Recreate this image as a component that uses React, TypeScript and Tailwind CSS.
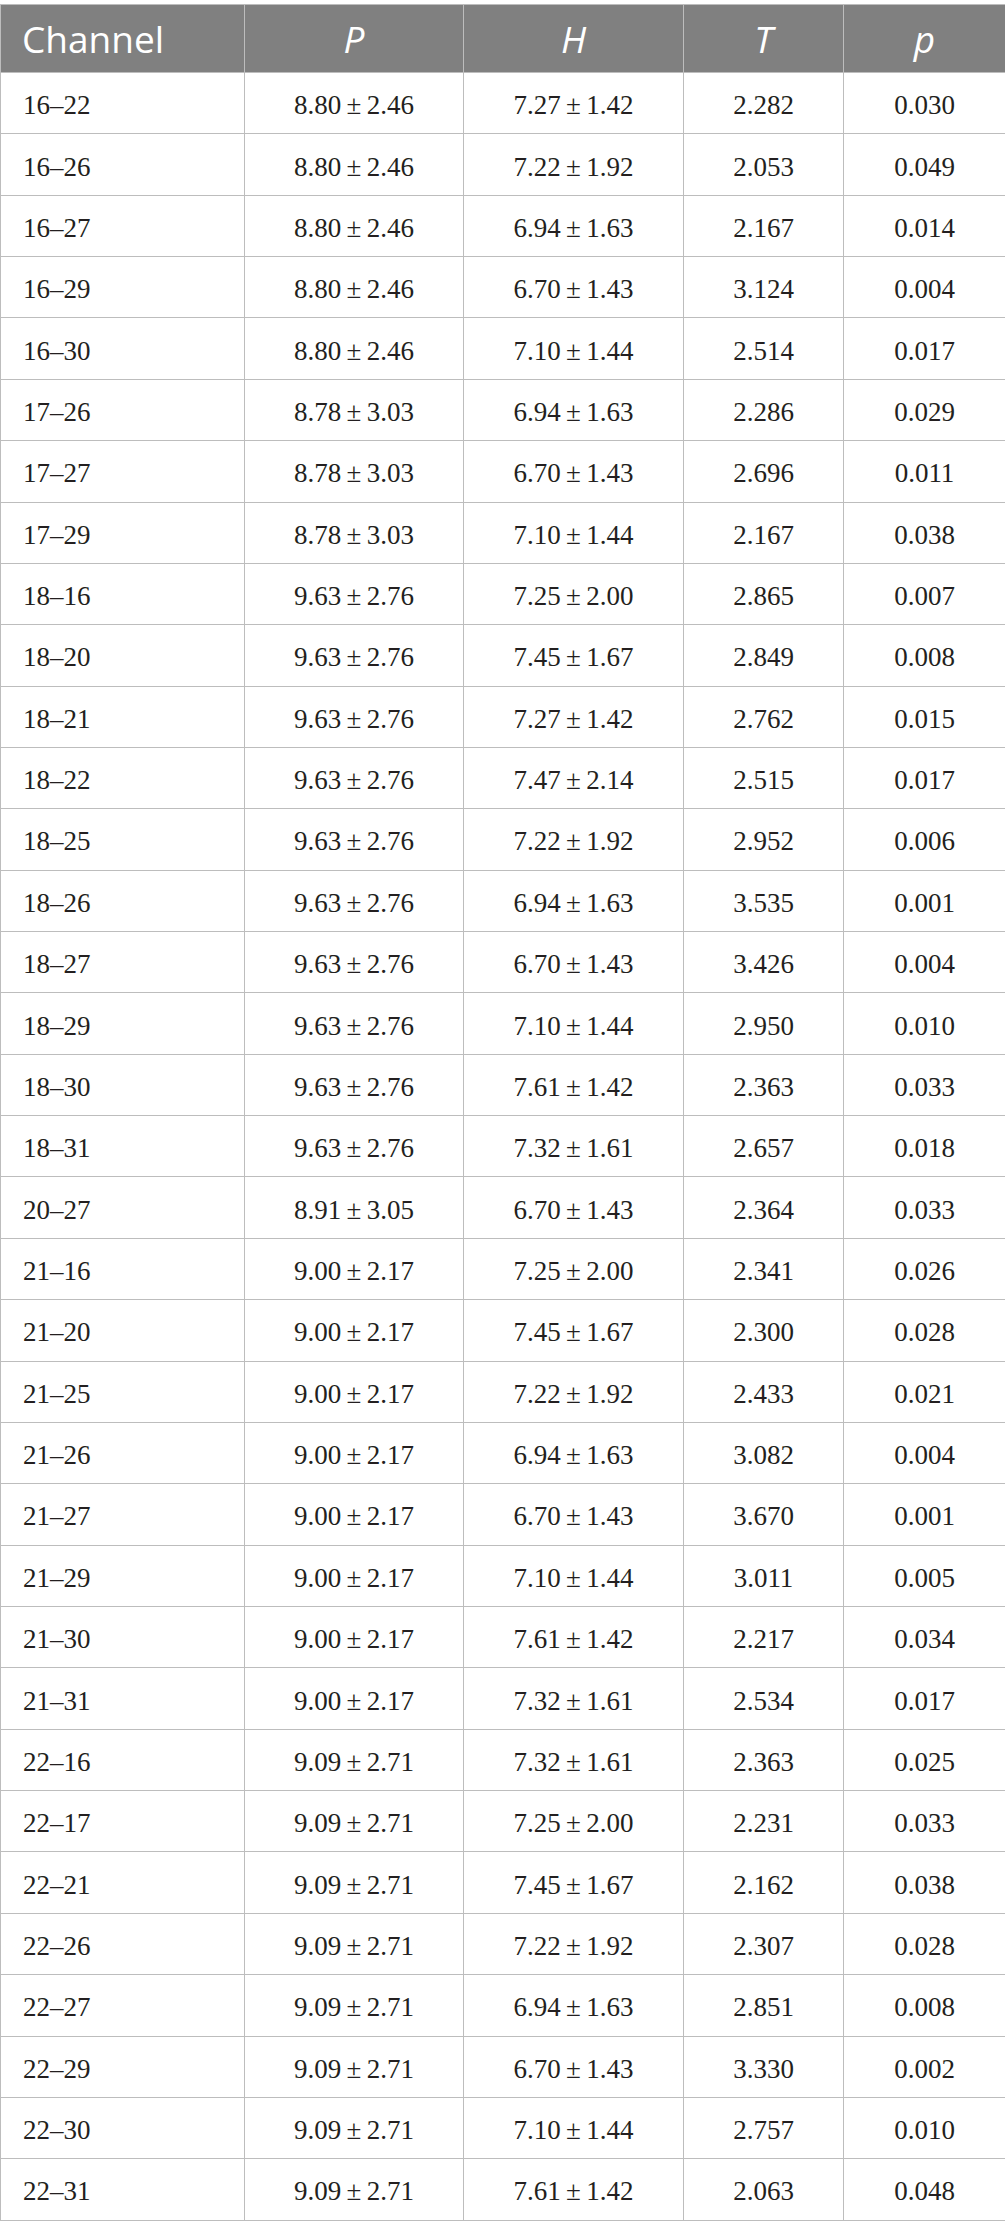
const rows: [string, string, string, string, string][] = [
  ["16–22", "8.80 ± 2.46", "7.27 ± 1.42", "2.282", "0.030"],
  ["16–26", "8.80 ± 2.46", "7.22 ± 1.92", "2.053", "0.049"],
  ["16–27", "8.80 ± 2.46", "6.94 ± 1.63", "2.167", "0.014"],
  ["16–29", "8.80 ± 2.46", "6.70 ± 1.43", "3.124", "0.004"],
  ["16–30", "8.80 ± 2.46", "7.10 ± 1.44", "2.514", "0.017"],
  ["17–26", "8.78 ± 3.03", "6.94 ± 1.63", "2.286", "0.029"],
  ["17–27", "8.78 ± 3.03", "6.70 ± 1.43", "2.696", "0.011"],
  ["17–29", "8.78 ± 3.03", "7.10 ± 1.44", "2.167", "0.038"],
  ["18–16", "9.63 ± 2.76", "7.25 ± 2.00", "2.865", "0.007"],
  ["18–20", "9.63 ± 2.76", "7.45 ± 1.67", "2.849", "0.008"],
  ["18–21", "9.63 ± 2.76", "7.27 ± 1.42", "2.762", "0.015"],
  ["18–22", "9.63 ± 2.76", "7.47 ± 2.14", "2.515", "0.017"],
  ["18–25", "9.63 ± 2.76", "7.22 ± 1.92", "2.952", "0.006"],
  ["18–26", "9.63 ± 2.76", "6.94 ± 1.63", "3.535", "0.001"],
  ["18–27", "9.63 ± 2.76", "6.70 ± 1.43", "3.426", "0.004"],
  ["18–29", "9.63 ± 2.76", "7.10 ± 1.44", "2.950", "0.010"],
  ["18–30", "9.63 ± 2.76", "7.61 ± 1.42", "2.363", "0.033"],
  ["18–31", "9.63 ± 2.76", "7.32 ± 1.61", "2.657", "0.018"],
  ["20–27", "8.91 ± 3.05", "6.70 ± 1.43", "2.364", "0.033"],
  ["21–16", "9.00 ± 2.17", "7.25 ± 2.00", "2.341", "0.026"],
  ["21–20", "9.00 ± 2.17", "7.45 ± 1.67", "2.300", "0.028"],
  ["21–25", "9.00 ± 2.17", "7.22 ± 1.92", "2.433", "0.021"],
  ["21–26", "9.00 ± 2.17", "6.94 ± 1.63", "3.082", "0.004"],
  ["21–27", "9.00 ± 2.17", "6.70 ± 1.43", "3.670", "0.001"],
  ["21–29", "9.00 ± 2.17", "7.10 ± 1.44", "3.011", "0.005"],
  ["21–30", "9.00 ± 2.17", "7.61 ± 1.42", "2.217", "0.034"],
  ["21–31", "9.00 ± 2.17", "7.32 ± 1.61", "2.534", "0.017"],
  ["22–16", "9.09 ± 2.71", "7.32 ± 1.61", "2.363", "0.025"],
  ["22–17", "9.09 ± 2.71", "7.25 ± 2.00", "2.231", "0.033"],
  ["22–21", "9.09 ± 2.71", "7.45 ± 1.67", "2.162", "0.038"],
  ["22–26", "9.09 ± 2.71", "7.22 ± 1.92", "2.307", "0.028"],
  ["22–27", "9.09 ± 2.71", "6.94 ± 1.63", "2.851", "0.008"],
  ["22–29", "9.09 ± 2.71", "6.70 ± 1.43", "3.330", "0.002"],
  ["22–30", "9.09 ± 2.71", "7.10 ± 1.44", "2.757", "0.010"],
  ["22–31", "9.09 ± 2.71", "7.61 ± 1.42", "2.063", "0.048"],
];

// thin spaces around ±
const pm = (s: string) => s.replace(" ± ", "\u2009±\u2009");

export default function App() {
  return (
    <div className="min-h-screen bg-white pt-[4px]">
      <table className="w-[1005px] table-fixed border-collapse border border-[#bdbdbd]">
        <colgroup>
          <col className="w-[244px]" />
          <col className="w-[219px]" />
          <col className="w-[220px]" />
          <col className="w-[160px]" />
          <col className="w-[162px]" />
        </colgroup>
        <thead>
          <tr className="h-[68px] bg-[#808080] text-[37px] leading-none text-white [font-family:'Open_Sans',sans-serif]">
            <th className="border border-[#bdbdbd] pl-[21px] text-left font-normal">Channel</th>
            <th className="border border-[#bdbdbd] text-center font-normal italic">P</th>
            <th className="border border-[#bdbdbd] text-center font-normal italic">H</th>
            <th className="border border-[#bdbdbd] text-center font-normal italic">T</th>
            <th className="border border-[#bdbdbd] text-center font-normal italic">p</th>
          </tr>
        </thead>
        <tbody className="text-[27px] leading-none text-[#231f20] [font-family:'Liberation_Serif',serif]">
          {rows.map((r) => (
            <tr key={r[0]} className="h-[61.37px]">
              <td className="border border-[#bdbdbd] pt-[5px] pl-[22px] text-left">{r[0]}</td>
              <td className="border border-[#bdbdbd] pt-[5px] text-center">{pm(r[1])}</td>
              <td className="border border-[#bdbdbd] pt-[5px] text-center">{pm(r[2])}</td>
              <td className="border border-[#bdbdbd] pt-[5px] text-center">{r[3]}</td>
              <td className="border border-[#bdbdbd] pt-[5px] text-center">{r[4]}</td>
            </tr>
          ))}
        </tbody>
      </table>
    </div>
  );
}
